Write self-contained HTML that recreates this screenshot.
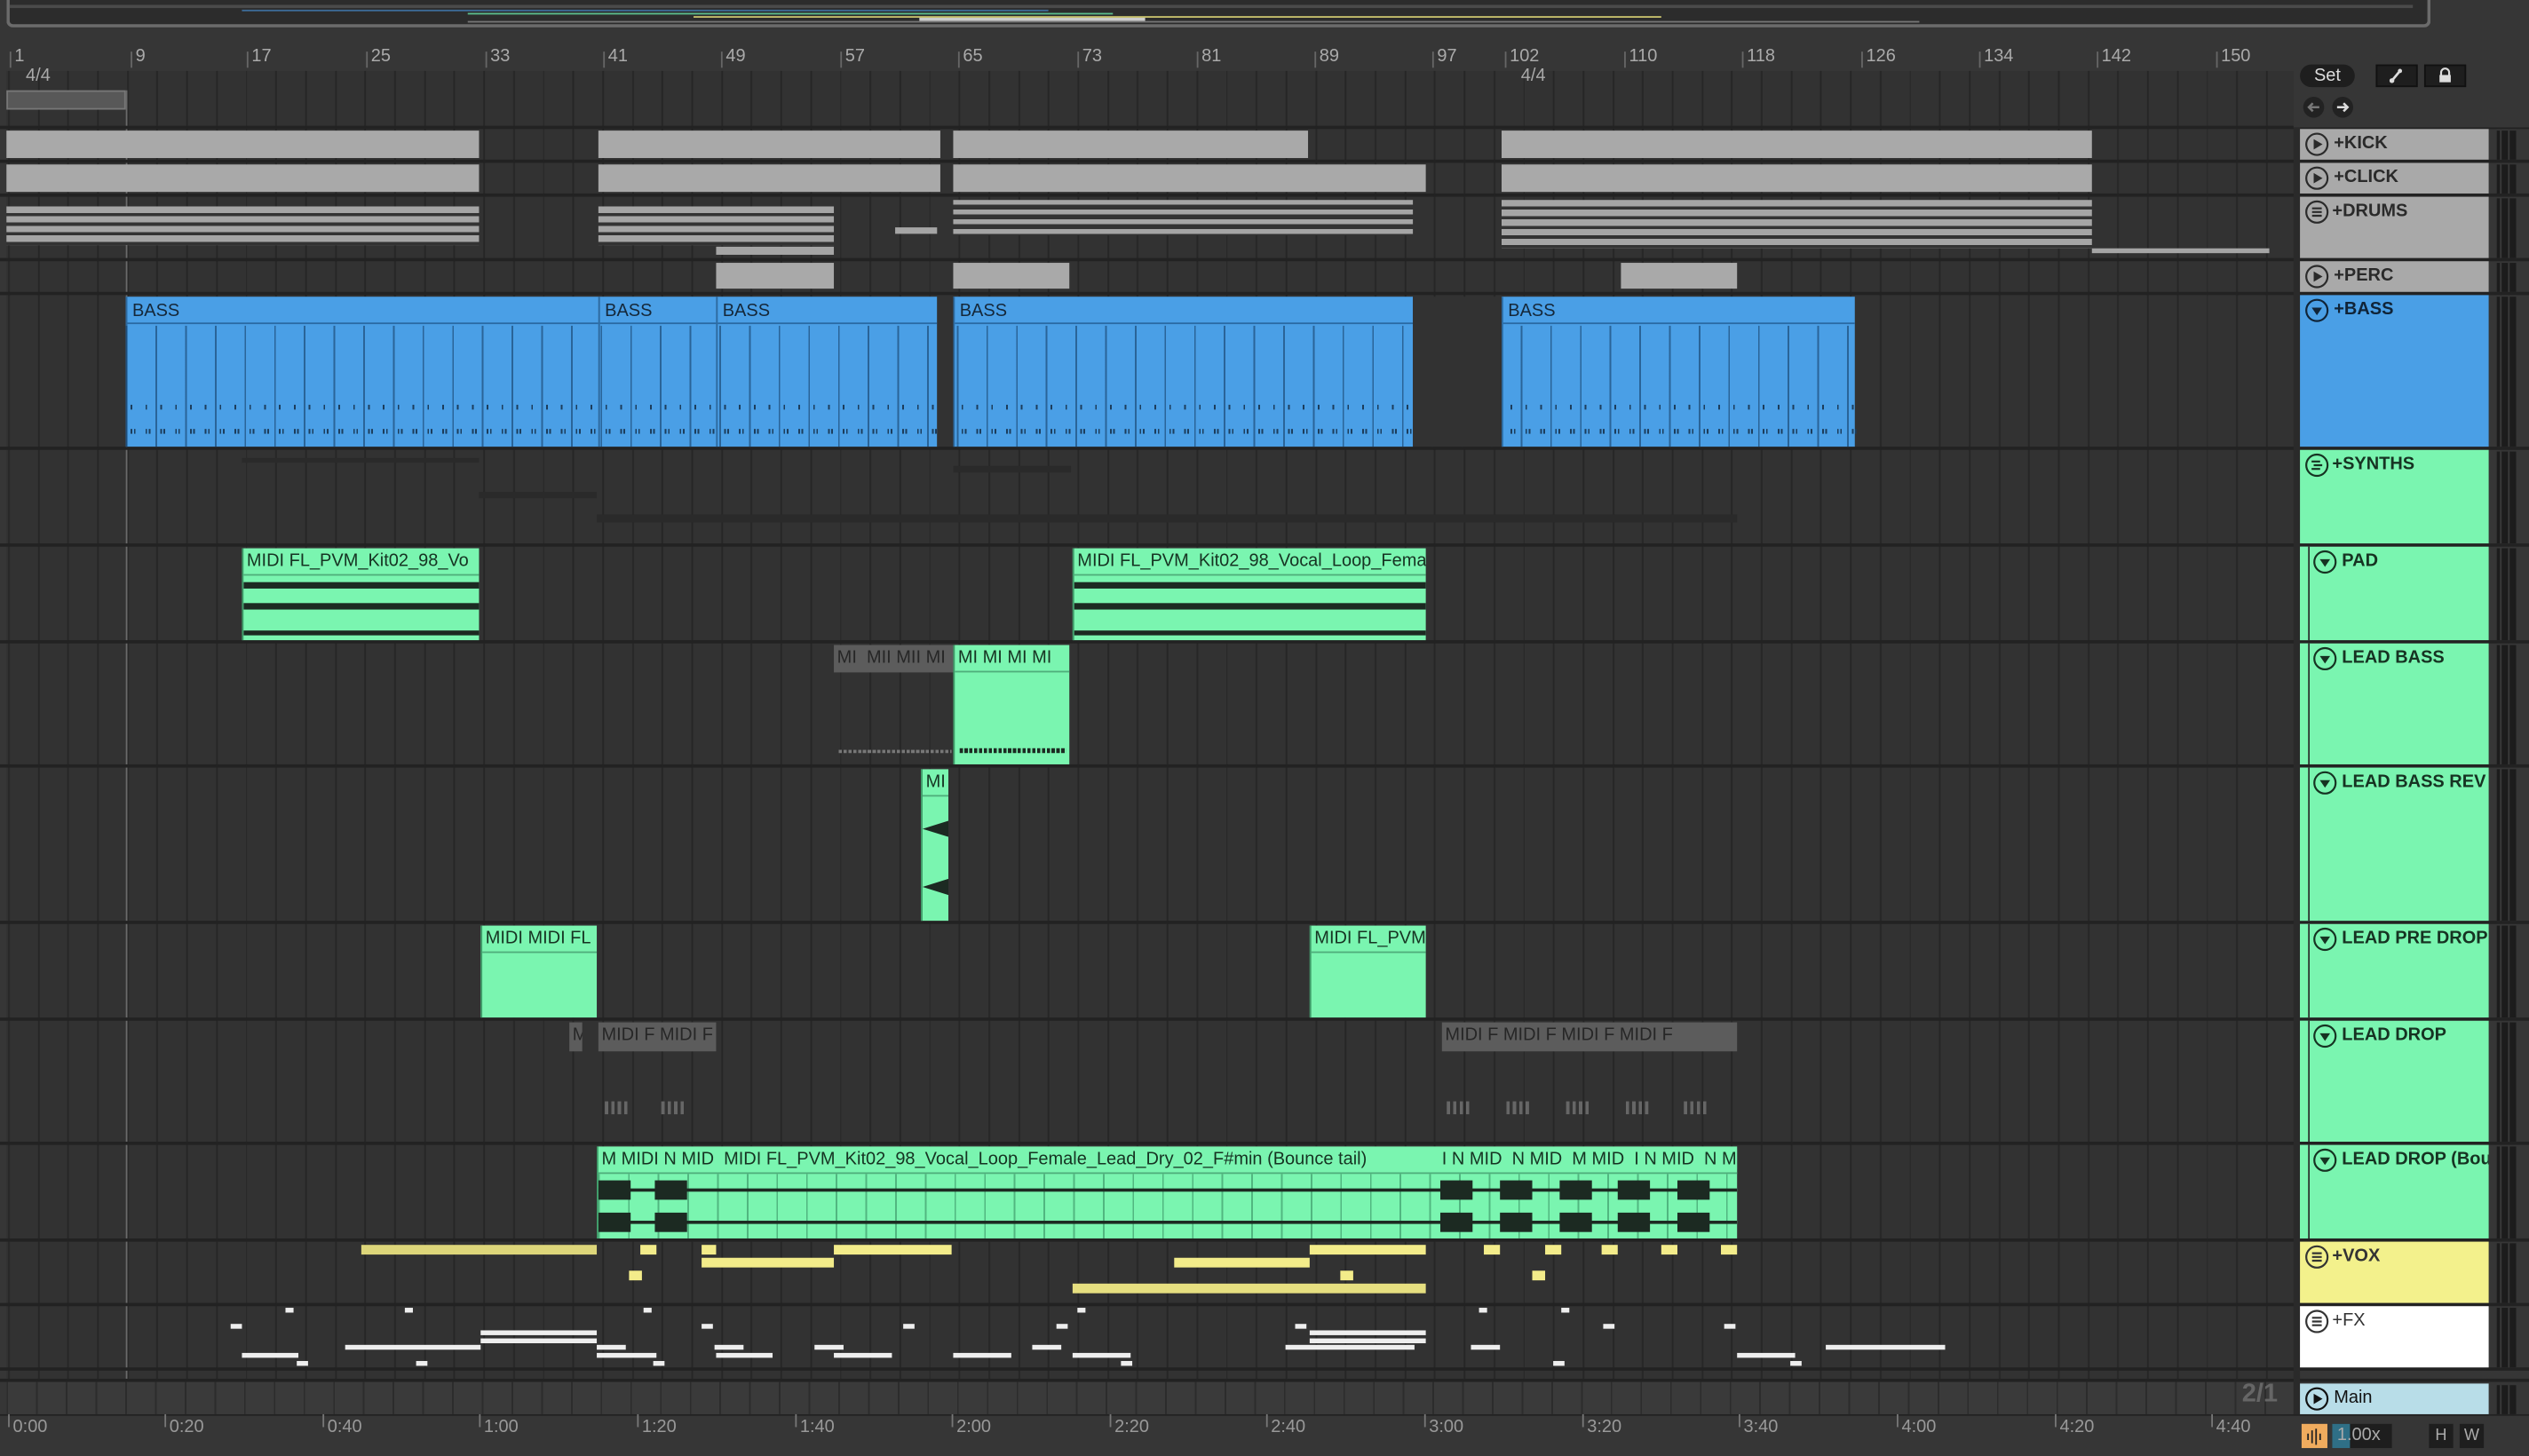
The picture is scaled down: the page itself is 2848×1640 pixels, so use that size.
<!DOCTYPE html>
<html><head><meta charset="utf-8"><style>
*{margin:0;padding:0;box-sizing:border-box}
html,body{width:2848px;height:1640px;overflow:hidden;background:#2b2b2b}
#w{position:absolute;left:0;top:0;width:1568px;height:903px;transform:scale(1.81633);transform-origin:0 0;font-family:"Liberation Sans",sans-serif;background:#363636}
.a{position:absolute}
.grid{position:absolute;left:4px;top:44px;width:1418px;height:834px;background-color:#323232;background-image:repeating-linear-gradient(90deg,#262626 0 1px,transparent 1px 18.42px);background-position:1px 0}
.sep{position:absolute;left:0;width:1568px;height:2px;background:#222}
.g{position:absolute;background:#a9a9a9}
.b{position:absolute;background:#4a9fe6;border-left:1px solid #2d6aa0}
.bh{position:absolute;left:0;right:0;top:0;height:17px;border-bottom:1px solid #2a6aa3;font-size:11px;color:#15283a;padding:3px 0 0 3px}
.gr{position:absolute;background:#7af5b0;overflow:hidden;border-left:1px solid #3e9a68}
.gh{position:absolute;left:0;right:0;top:0;height:17px;border-bottom:1px solid #4fae7b;font-size:11px;color:#163322;padding:2px 0 0 2px;white-space:nowrap;overflow:hidden}
.dk{position:absolute;background:#5c5c5c;font-size:11px;color:#262626;padding:2px 0 0 2px;white-space:nowrap;overflow:hidden}
.y{position:absolute;background:#f3ec8a;height:6px}
.wt{position:absolute;background:#eeeeee;height:3px}
.hd{position:absolute;left:1426px;width:117px;font-weight:bold;font-size:11px;color:#222;padding:3px 0 0 21px}
.ic{position:absolute;left:3px;top:2px;width:15px;height:15px}
.m{position:absolute;left:1548px;width:12px;background:#3a3a3a;border-left:2px solid #1c1c1c;border-right:4px solid #1c1c1c}
.m::after{content:"";position:absolute;left:1px;top:0;width:4px;height:100%;background:#1c1c1c}
.n{position:absolute;top:29px;font-size:11px;color:#aaa}
.n::before{content:"";position:absolute;left:-3px;top:3px;width:1px;height:10px;background:#666}
.t{position:absolute;top:879px;font-size:11px;color:#999}
.t::before{content:"";position:absolute;left:-3px;top:-2px;width:1px;height:8px;background:#777}
</style></head><body><div id="w">
<svg width="0" height="0" style="position:absolute"><defs>
<g id="play"><circle cx="7.5" cy="7.5" r="6.6" fill="none" stroke="currentColor" stroke-width="1.2"/><path d="M5.5 4.3 L11 7.5 L5.5 10.7Z" fill="currentColor"/></g>
<g id="menu"><circle cx="7.5" cy="7.5" r="6.6" fill="none" stroke="currentColor" stroke-width="1.2"/><path d="M4.5 5.2H10.5M4.5 7.5H10.5M4.5 9.8H10.5" stroke="currentColor" stroke-width="1.2"/></g>
<g id="menu2"><circle cx="7.5" cy="7.5" r="6.6" fill="none" stroke="currentColor" stroke-width="1.2"/><path d="M4.2 5.2H9.5M5.5 7.5H10.8M4.2 9.8H9.5" stroke="currentColor" stroke-width="1.2"/></g>
<g id="down"><circle cx="7.5" cy="7.5" r="6.6" fill="none" stroke="currentColor" stroke-width="1.2"/><path d="M4.3 5.8 L10.7 5.8 L7.5 10.5Z" fill="currentColor"/></g>
</defs></svg>
<!-- overview -->
<div class="a" style="left:4px;top:0;width:1503px;height:17px;background:#2c2c2c;border:2px solid #6b6b6b;border-top:none;border-radius:0 0 4px 4px"></div>
<div class="a" style="left:6px;top:3px;width:1490px;height:2px;background:#4a4a4a"></div>
<div class="a" style="left:150px;top:6px;width:500px;height:1px;background:#3d6c99"></div>
<div class="a" style="left:290px;top:8px;width:400px;height:1px;background:#5cbf8e"></div>
<div class="a" style="left:430px;top:10px;width:600px;height:1px;background:#c9c36e"></div>
<div class="a" style="left:570px;top:11px;width:140px;height:2px;background:#cccccc"></div>
<div class="a" style="left:290px;top:13px;width:900px;height:1px;background:#777"></div>
<!-- ruler -->
<div class="n" style="left:9px">1</div><div class="n" style="left:84px">9</div><div class="n" style="left:156px">17</div><div class="n" style="left:230px">25</div><div class="n" style="left:304px">33</div><div class="n" style="left:377px">41</div><div class="n" style="left:450px">49</div><div class="n" style="left:524px">57</div><div class="n" style="left:597px">65</div><div class="n" style="left:671px">73</div><div class="n" style="left:745px">81</div><div class="n" style="left:818px">89</div><div class="n" style="left:891px">97</div><div class="n" style="left:936px">102</div><div class="n" style="left:1010px">110</div><div class="n" style="left:1083px">118</div><div class="n" style="left:1157px">126</div><div class="n" style="left:1230px">134</div><div class="n" style="left:1303px">142</div><div class="n" style="left:1377px">150</div>
<div class="grid"></div>
<div class="a" style="left:16px;top:41px;font-size:11px;color:#aaa">4/4</div>
<div class="a" style="left:943px;top:41px;font-size:11px;color:#aaa">4/4</div>
<div class="a" style="left:4px;top:56px;width:74px;height:12px;background:#585858;border:1px solid #777"></div>
<div class="a" style="left:78px;top:56px;width:1px;height:822px;background:#6a6a6a"></div>
<!-- separators -->
<div class="sep" style="top:78px"></div><div class="sep" style="top:99px"></div><div class="sep" style="top:120px"></div><div class="sep" style="top:160px"></div><div class="sep" style="top:181px"></div><div class="sep" style="top:277px"></div><div class="sep" style="top:337px"></div><div class="sep" style="top:397px"></div><div class="sep" style="top:474px"></div><div class="sep" style="top:571px"></div><div class="sep" style="top:631px"></div><div class="sep" style="top:708px"></div><div class="sep" style="top:768px"></div><div class="sep" style="top:808px"></div><div class="sep" style="top:848px"></div><div class="sep" style="top:855px"></div><div class="sep" style="top:877px"></div>
<!-- kick/click -->
<div class="g" style="left:4px;top:81px;width:293px;height:17px"></div><div class="g" style="left:371px;top:81px;width:212px;height:17px"></div><div class="g" style="left:591px;top:81px;width:220px;height:17px"></div><div class="g" style="left:931px;top:81px;width:366px;height:17px"></div>
<div class="g" style="left:4px;top:102px;width:293px;height:17px"></div><div class="g" style="left:371px;top:102px;width:212px;height:17px"></div><div class="g" style="left:591px;top:102px;width:293px;height:17px"></div><div class="g" style="left:931px;top:102px;width:366px;height:17px"></div>
<!-- drums -->
<div class="a" style="left:4px;top:128px;width:293px;height:24px;background:repeating-linear-gradient(180deg,#a5a5a5 0 4px,#333 4px 6px)"></div>
<div class="a" style="left:371px;top:128px;width:146px;height:24px;background:repeating-linear-gradient(180deg,#a5a5a5 0 4px,#333 4px 6px)"></div>
<div class="a" style="left:444px;top:153px;width:73px;height:5px;background:#a5a5a5"></div>
<div class="a" style="left:555px;top:141px;width:26px;height:4px;background:#a5a5a5"></div>
<div class="a" style="left:591px;top:124px;width:285px;height:22px;background:repeating-linear-gradient(180deg,#a5a5a5 0 3px,#333 3px 6px)"></div>
<div class="a" style="left:931px;top:124px;width:366px;height:30px;background:repeating-linear-gradient(180deg,#a5a5a5 0 4px,#333 4px 6px)"></div>
<div class="a" style="left:1297px;top:154px;width:110px;height:3px;background:#a5a5a5"></div>
<div class="g" style="left:444px;top:163px;width:73px;height:16px"></div><div class="g" style="left:591px;top:163px;width:72px;height:16px"></div><div class="g" style="left:1005px;top:163px;width:72px;height:16px"></div>
<!-- bass -->
<div class="b" style="left:78px;top:184px;width:293px;height:93px"><div class="bh">BASS</div></div>
<div class="b" style="left:371px;top:184px;width:73px;height:93px"><div class="bh">BASS</div></div>
<div class="b" style="left:444px;top:184px;width:137px;height:93px"><div class="bh">BASS</div></div>
<div class="b" style="left:591px;top:184px;width:285px;height:93px"><div class="bh">BASS</div></div>
<div class="b" style="left:931px;top:184px;width:219px;height:93px"><div class="bh">BASS</div></div>
<div class="a" style="left:78px;top:202px;width:1073px;height:75px;background:repeating-linear-gradient(90deg,rgba(20,60,100,.6) 0 1px,transparent 1px 18.4px)"></div>
<div class="a" style="left:78px;top:251px;width:1073px;height:3px;background:repeating-linear-gradient(90deg,transparent 0 3px,#1c3d5c 3px 4px,transparent 4px 9.2px)"></div>
<div class="a" style="left:78px;top:266px;width:1073px;height:3px;background:repeating-linear-gradient(90deg,transparent 0 3px,#1c3d5c 3px 4px,transparent 4px 5px,#1c3d5c 5px 6px,transparent 6px 9.2px)"></div>
<div class="a" style="left:581px;top:184px;width:10px;height:93px;background:#323232"></div>
<div class="a" style="left:876px;top:184px;width:55px;height:93px;background:#323232"></div>
<!-- synths faint -->
<div class="a" style="left:150px;top:284px;width:147px;height:3px;background:#2a2a2a"></div>
<div class="a" style="left:297px;top:305px;width:73px;height:4px;background:#2a2a2a"></div>
<div class="a" style="left:370px;top:319px;width:707px;height:5px;background:#2a2a2a"></div>
<div class="a" style="left:591px;top:289px;width:73px;height:4px;background:#2a2a2a"></div>
<!-- pad -->
<div class="gr" style="left:150px;top:340px;width:147px;height:57px"><div class="gh">MIDI FL_PVM_Kit02_98_Vo</div><div class="a" style="left:0;top:21px;width:100%;height:4px;background:#1c2a22"></div><div class="a" style="left:0;top:34px;width:100%;height:4px;background:#1c2a22"></div><div class="a" style="left:0;top:51px;width:100%;height:3px;background:#1c2a22"></div></div>
<div class="gr" style="left:665px;top:340px;width:219px;height:57px"><div class="gh">MIDI FL_PVM_Kit02_98_Vocal_Loop_Female</div><div class="a" style="left:0;top:21px;width:100%;height:4px;background:#1c2a22"></div><div class="a" style="left:0;top:34px;width:100%;height:4px;background:#1c2a22"></div><div class="a" style="left:0;top:51px;width:100%;height:3px;background:#1c2a22"></div></div>
<!-- lead bass -->
<div class="dk" style="left:517px;top:400px;width:74px;height:17px">MI&nbsp; MII MII MI</div>
<div class="a" style="left:520px;top:465px;width:70px;height:2px;background:repeating-linear-gradient(90deg,#777 0 2px,transparent 2px 3px)"></div>
<div class="gr" style="left:591px;top:400px;width:72px;height:74px"><div class="gh">MI MI MI MI</div><div class="a" style="left:3px;top:64px;width:66px;height:3px;background:repeating-linear-gradient(90deg,#1c2a22 0 2px,transparent 2px 3px)"></div></div>
<!-- lead bass rev -->
<div class="gr" style="left:571px;top:477px;width:17px;height:94px"><div class="gh">MI</div><div class="a" style="left:0;top:32px;width:16px;height:10px;background:#1c2a22;clip-path:polygon(0 50%,100% 0,100% 100%)"></div><div class="a" style="left:0;top:68px;width:16px;height:10px;background:#1c2a22;clip-path:polygon(0 50%,100% 0,100% 100%)"></div></div>
<!-- lead pre drop -->
<div class="gr" style="left:298px;top:574px;width:72px;height:57px"><div class="gh">MIDI MIDI FL</div></div>
<div class="gr" style="left:812px;top:574px;width:72px;height:57px"><div class="gh">MIDI FL_PVM</div></div>
<!-- lead drop -->
<div class="dk" style="left:353px;top:634px;width:8px;height:18px">M</div>
<div class="dk" style="left:371px;top:634px;width:73px;height:18px">MIDI F MIDI F</div>
<div class="dk" style="left:894px;top:634px;width:183px;height:18px">MIDI F MIDI F MIDI F MIDI F</div>
<div class="a" style="left:375px;top:683px;width:14px;height:8px;background:repeating-linear-gradient(90deg,#666 0 2px,transparent 2px 4px)"></div>
<div class="a" style="left:410px;top:683px;width:14px;height:8px;background:repeating-linear-gradient(90deg,#666 0 2px,transparent 2px 4px)"></div>
<div class="a" style="left:897px;top:683px;width:14px;height:8px;background:repeating-linear-gradient(90deg,#666 0 2px,transparent 2px 4px)"></div>
<div class="a" style="left:934px;top:683px;width:14px;height:8px;background:repeating-linear-gradient(90deg,#666 0 2px,transparent 2px 4px)"></div>
<div class="a" style="left:971px;top:683px;width:14px;height:8px;background:repeating-linear-gradient(90deg,#666 0 2px,transparent 2px 4px)"></div>
<div class="a" style="left:1008px;top:683px;width:14px;height:8px;background:repeating-linear-gradient(90deg,#666 0 2px,transparent 2px 4px)"></div>
<div class="a" style="left:1044px;top:683px;width:14px;height:8px;background:repeating-linear-gradient(90deg,#666 0 2px,transparent 2px 4px)"></div>
<!-- lead drop bounce -->
<div class="gr" style="left:370px;top:711px;width:707px;height:57px;background-image:repeating-linear-gradient(90deg,rgba(40,120,80,.5) 0 1px,transparent 1px 18.4px)"><div class="gh" style="background:#7af5b0">M MIDI N MID&nbsp; MIDI FL_PVM_Kit02_98_Vocal_Loop_Female_Lead_Dry_02_F#min (Bounce tail)<span style="position:absolute;left:521px;background:#7af5b0;padding-left:2px">I N MID&nbsp; N MID&nbsp; M MID&nbsp; I N MID&nbsp; N MID</span></div>
<div class="a" style="left:0;top:26px;width:100%;height:2px;background:#1c2a22"></div><div class="a" style="left:0;top:46px;width:100%;height:2px;background:#1c2a22"></div>
<div class="a" style="left:0;top:21px;width:20px;height:12px;background:#1c2a22"></div><div class="a" style="left:35px;top:21px;width:20px;height:12px;background:#1c2a22"></div>
<div class="a" style="left:0;top:41px;width:20px;height:12px;background:#1c2a22"></div><div class="a" style="left:35px;top:41px;width:20px;height:12px;background:#1c2a22"></div>
<div class="a" style="left:522px;top:21px;width:20px;height:12px;background:#1c2a22"></div><div class="a" style="left:559px;top:21px;width:20px;height:12px;background:#1c2a22"></div><div class="a" style="left:596px;top:21px;width:20px;height:12px;background:#1c2a22"></div><div class="a" style="left:632px;top:21px;width:20px;height:12px;background:#1c2a22"></div><div class="a" style="left:669px;top:21px;width:20px;height:12px;background:#1c2a22"></div>
<div class="a" style="left:522px;top:41px;width:20px;height:12px;background:#1c2a22"></div><div class="a" style="left:559px;top:41px;width:20px;height:12px;background:#1c2a22"></div><div class="a" style="left:596px;top:41px;width:20px;height:12px;background:#1c2a22"></div><div class="a" style="left:632px;top:41px;width:20px;height:12px;background:#1c2a22"></div><div class="a" style="left:669px;top:41px;width:20px;height:12px;background:#1c2a22"></div>
</div>
<!-- vox -->
<div class="y" style="left:224px;top:772px;width:146px;background:#ddd67a"></div><div class="y" style="left:397px;top:772px;width:10px"></div><div class="y" style="left:435px;top:772px;width:9px"></div><div class="y" style="left:517px;top:772px;width:73px"></div><div class="y" style="left:812px;top:772px;width:72px"></div><div class="y" style="left:920px;top:772px;width:10px"></div><div class="y" style="left:958px;top:772px;width:10px"></div><div class="y" style="left:993px;top:772px;width:10px"></div><div class="y" style="left:1030px;top:772px;width:10px"></div><div class="y" style="left:1067px;top:772px;width:10px"></div>
<div class="y" style="left:435px;top:780px;width:82px"></div><div class="y" style="left:728px;top:780px;width:84px"></div>
<div class="y" style="left:390px;top:788px;width:8px"></div><div class="y" style="left:831px;top:788px;width:8px"></div><div class="y" style="left:950px;top:788px;width:8px"></div>
<div class="y" style="left:665px;top:796px;width:219px;background:#e6df80"></div>
<!-- fx -->
<div class="wt" style="left:177px;top:811px;width:5px"></div><div class="wt" style="left:251px;top:811px;width:5px"></div><div class="wt" style="left:399px;top:811px;width:5px"></div><div class="wt" style="left:668px;top:811px;width:5px"></div><div class="wt" style="left:917px;top:811px;width:5px"></div><div class="wt" style="left:968px;top:811px;width:5px"></div>
<div class="wt" style="left:143px;top:821px;width:7px"></div><div class="wt" style="left:435px;top:821px;width:7px"></div><div class="wt" style="left:560px;top:821px;width:7px"></div><div class="wt" style="left:655px;top:821px;width:7px"></div><div class="wt" style="left:803px;top:821px;width:7px"></div><div class="wt" style="left:994px;top:821px;width:7px"></div><div class="wt" style="left:1069px;top:821px;width:7px"></div>
<div class="wt" style="left:298px;top:825px;width:72px"></div><div class="wt" style="left:812px;top:825px;width:72px"></div>
<div class="wt" style="left:298px;top:830px;width:72px"></div><div class="wt" style="left:812px;top:830px;width:72px"></div>
<div class="wt" style="left:214px;top:834px;width:84px"></div><div class="wt" style="left:370px;top:834px;width:18px"></div><div class="wt" style="left:443px;top:834px;width:18px"></div><div class="wt" style="left:505px;top:834px;width:18px"></div><div class="wt" style="left:640px;top:834px;width:18px"></div><div class="wt" style="left:797px;top:834px;width:80px"></div><div class="wt" style="left:912px;top:834px;width:18px"></div><div class="wt" style="left:1132px;top:834px;width:74px"></div>
<div class="wt" style="left:150px;top:839px;width:35px"></div><div class="wt" style="left:370px;top:839px;width:37px"></div><div class="wt" style="left:444px;top:839px;width:35px"></div><div class="wt" style="left:517px;top:839px;width:36px"></div><div class="wt" style="left:591px;top:839px;width:36px"></div><div class="wt" style="left:665px;top:839px;width:36px"></div><div class="wt" style="left:1077px;top:839px;width:36px"></div>
<div class="wt" style="left:184px;top:844px;width:7px"></div><div class="wt" style="left:258px;top:844px;width:7px"></div><div class="wt" style="left:405px;top:844px;width:7px"></div><div class="wt" style="left:695px;top:844px;width:7px"></div><div class="wt" style="left:963px;top:844px;width:7px"></div><div class="wt" style="left:1110px;top:844px;width:7px"></div>
<!-- main row -->
<div class="a" style="left:4px;top:857px;width:1418px;height:20px;background:#3a3a3a;background-image:repeating-linear-gradient(90deg,#2c2c2c 0 1px,transparent 1px 18.42px)"></div>
<div class="a" style="left:1390px;top:856px;font-size:16px;font-weight:bold;color:#666">2/1</div>
<!-- time ruler -->
<div class="a" style="left:0;top:878px;width:1568px;height:25px;background:#363636"></div>
<div class="t" style="left:8px">0:00</div><div class="t" style="left:105px">0:20</div><div class="t" style="left:203px">0:40</div><div class="t" style="left:300px">1:00</div><div class="t" style="left:398px">1:20</div><div class="t" style="left:496px">1:40</div><div class="t" style="left:593px">2:00</div><div class="t" style="left:691px">2:20</div><div class="t" style="left:788px">2:40</div><div class="t" style="left:886px">3:00</div><div class="t" style="left:984px">3:20</div><div class="t" style="left:1081px">3:40</div><div class="t" style="left:1179px">4:00</div><div class="t" style="left:1277px">4:20</div><div class="t" style="left:1374px">4:40</div>
<!-- right panel -->
<div class="a" style="left:1422px;top:44px;width:146px;height:35px;background:#363636"></div>
<div class="a" style="left:1426px;top:40px;width:34px;height:14px;border-radius:7px;background:#1e1e1e;color:#ddd;font-size:11px;text-align:center;line-height:14px">Set</div>
<div class="a" style="left:1473px;top:40px;width:26px;height:14px;background:#1e1e1e;border:1px solid #111"><svg width="26" height="14" style="position:absolute;left:-1px;top:-1px"><path d="M10 10 L15 4" stroke="#ddd" stroke-width="1.5"/><circle cx="10" cy="10" r="1.5" fill="#ddd"/><circle cx="15" cy="4" r="1.3" fill="#ddd"/></svg></div>
<div class="a" style="left:1503px;top:40px;width:26px;height:14px;background:#1e1e1e;border:1px solid #111"><svg width="26" height="14" style="position:absolute;left:-1px;top:-1px"><path d="M10.5 6.5 V5 a2.5 2.5 0 0 1 5 0 V6.5" fill="none" stroke="#ddd" stroke-width="1.2"/><rect x="9.5" y="6.5" width="7" height="4.5" fill="#ddd"/></svg></div>
<div class="a" style="left:1428px;top:60px;width:13px;height:13px;border-radius:50%;background:#222"><svg width="13" height="13"><path d="M10 6.5H3.5M6 4L3.5 6.5L6 9" fill="none" stroke="#777" stroke-width="1.4"/></svg></div>
<div class="a" style="left:1446px;top:60px;width:13px;height:13px;border-radius:50%;background:#222"><svg width="13" height="13"><path d="M3 6.5H9.5M7 4L9.5 6.5L7 9" fill="none" stroke="#ddd" stroke-width="1.4"/></svg></div>
<div class="a" style="left:1422px;top:79px;width:4px;height:798px;background:#2a2a2a"></div>
<div class="hd" style="top:80px;height:19px;background:#a9a9a9;color:#2a2a2a"><svg class="ic"><use href="#play"/></svg>+KICK</div>
<div class="hd" style="top:101px;height:19px;background:#a9a9a9;color:#2a2a2a"><svg class="ic"><use href="#play"/></svg>+CLICK</div>
<div class="hd" style="top:122px;height:38px;background:#a9a9a9;padding-left:20px;color:#2a2a2a"><svg class="ic"><use href="#menu"/></svg>+DRUMS</div>
<div class="hd" style="top:162px;height:19px;background:#a9a9a9;color:#2a2a2a"><svg class="ic"><use href="#play"/></svg>+PERC</div>
<div class="hd" style="top:183px;height:94px;background:#4a9fe6;color:#102438"><svg class="ic"><use href="#down"/></svg>+BASS</div>
<div class="hd" style="top:279px;height:58px;background:#7af5b0;padding-left:20px;color:#163322"><svg class="ic"><use href="#menu2"/></svg>+SYNTHS</div>
<div class="hd" style="top:339px;height:58px;background:#7af5b0;border-left:5px solid #7af5b0;box-shadow:inset 1px 0 #2a2a2a;color:#163322"><svg class="ic"><use href="#down"/></svg>PAD</div>
<div class="hd" style="top:399px;height:75px;background:#7af5b0;border-left:5px solid #7af5b0;box-shadow:inset 1px 0 #2a2a2a;color:#163322"><svg class="ic"><use href="#down"/></svg>LEAD BASS</div>
<div class="hd" style="top:476px;height:95px;background:#7af5b0;border-left:5px solid #7af5b0;box-shadow:inset 1px 0 #2a2a2a;color:#163322"><svg class="ic"><use href="#down"/></svg>LEAD BASS REV</div>
<div class="hd" style="top:573px;height:58px;background:#7af5b0;border-left:5px solid #7af5b0;box-shadow:inset 1px 0 #2a2a2a;color:#163322"><svg class="ic"><use href="#down"/></svg>LEAD PRE DROP</div>
<div class="hd" style="top:633px;height:75px;background:#7af5b0;border-left:5px solid #7af5b0;box-shadow:inset 1px 0 #2a2a2a;color:#163322"><svg class="ic"><use href="#down"/></svg>LEAD DROP</div>
<div class="hd" style="top:710px;height:58px;background:#7af5b0;border-left:5px solid #7af5b0;box-shadow:inset 1px 0 #2a2a2a;color:#163322;white-space:nowrap;overflow:hidden"><svg class="ic"><use href="#down"/></svg>LEAD DROP (Bou</div>
<div class="hd" style="top:770px;height:38px;background:#f3f18c;padding-left:20px;color:#333"><svg class="ic"><use href="#menu"/></svg>+VOX</div>
<div class="hd" style="top:810px;height:38px;background:#ffffff;padding-left:20px;font-weight:normal;color:#333"><svg class="ic"><use href="#menu"/></svg>+FX</div>
<div class="hd" style="top:858px;height:19px;background:#b8dde8;font-weight:normal;color:#111"><svg class="ic"><use href="#play"/></svg>Main</div>
<div class="m" style="top:81px;height:18px"></div><div class="m" style="top:102px;height:18px"></div><div class="m" style="top:123px;height:37px"></div><div class="m" style="top:163px;height:18px"></div><div class="m" style="top:184px;height:93px"></div><div class="m" style="top:280px;height:57px"></div><div class="m" style="top:340px;height:57px"></div><div class="m" style="top:400px;height:74px"></div><div class="m" style="top:477px;height:94px"></div><div class="m" style="top:574px;height:57px"></div><div class="m" style="top:634px;height:74px"></div><div class="m" style="top:711px;height:57px"></div><div class="m" style="top:771px;height:37px"></div><div class="m" style="top:811px;height:37px"></div><div class="m" style="top:859px;height:18px"></div>
<div class="a" style="left:1427px;top:883px;width:16px;height:15px;background:#f0ac5e"><svg width="16" height="15"><path d="M4 6V10M6.5 4V12M9 3V13M11.5 6V10" stroke="#222" stroke-width="1"/></svg></div>
<div class="a" style="left:1446px;top:883px;width:37px;height:15px;background:#1e1e1e;color:#aaa;font-size:11px;line-height:15px;padding-left:3px"><span style="position:absolute;left:0;top:0;width:11px;height:15px;background:#2f6f86"></span><span style="position:relative">1.00x</span></div>
<div class="a" style="left:1506px;top:883px;width:15px;height:15px;background:#1e1e1e;color:#aaa;font-size:10px;text-align:center;line-height:15px">H</div>
<div class="a" style="left:1525px;top:883px;width:15px;height:15px;background:#1e1e1e;color:#aaa;font-size:10px;text-align:center;line-height:15px">W</div>
</div></body></html>
